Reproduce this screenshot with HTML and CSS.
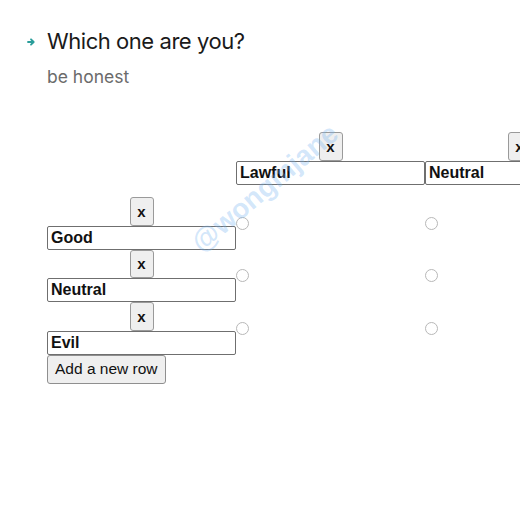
FILE: index.html
```html
<!DOCTYPE html>
<html>
<head>
<meta charset="utf-8">
<link rel="stylesheet" href="styles.css">
</head>
<body>
<div class="page">
  <div class="heading">
    <svg class="arrow" width="8" height="8" viewBox="0 0 8 8"><path d="M1 4H6.5M4 1.3L6.7 4L4 6.7" fill="none" stroke="#2a9d9a" stroke-width="1.8" stroke-linecap="round" stroke-linejoin="round"/></svg>
    <h1 class="title">Which one are you?</h1>
  </div>
  <p class="subtitle">be honest</p>

  <table class="grid">
    <thead>
      <tr>
        <th class="head-cell"></th>
        <th class="head-cell"><button class="del">x</button><input class="field" value="Lawful"></th>
        <th class="head-cell"><button class="del">x</button><input class="field" value="Neutral"></th>
      </tr>
    </thead>
    <tbody>
      <tr>
        <td class="row-cell"><button class="del">x</button><input class="field" value="Good"></td>
        <td class="radio-cell"><input type="radio" class="radio" name="r1"></td>
        <td class="radio-cell"><input type="radio" class="radio" name="r1"></td>
      </tr>
      <tr>
        <td class="row-cell"><button class="del">x</button><input class="field" value="Neutral"></td>
        <td class="radio-cell"><input type="radio" class="radio" name="r2"></td>
        <td class="radio-cell"><input type="radio" class="radio" name="r2"></td>
      </tr>
      <tr>
        <td class="row-cell"><button class="del">x</button><input class="field" value="Evil"></td>
        <td class="radio-cell"><input type="radio" class="radio" name="r3"></td>
        <td class="radio-cell"><input type="radio" class="radio" name="r3"></td>
      </tr>
    </tbody>
  </table>
  <button class="add">Add a new row</button>
</div>
<div class="watermark">@wongmjane</div>
</body>
</html>
```

FILE: styles.css
```css
html, body {
  margin: 0;
  padding: 0;
  background: #ffffff;
  overflow: hidden;
  width: 520px;
  height: 520px;
}

.page {
  padding: 26px 0 0 27px;
  font-family: "Liberation Sans", Arial, sans-serif;
  color: #111;
}

.heading {
  display: flex;
  align-items: center;
  gap: 12px;
}

.arrow {
  flex: none;
  margin-top: 1px;
}

.title {
  margin: 0;
  font-family: Inter, "Open Sans", sans-serif;
  font-weight: 400;
  font-size: 22px;
  line-height: 30px;
  color: #1a1a1a;
  letter-spacing: -0.45px;
}

.subtitle {
  margin: 9px 0 0 20px;
  font-family: Inter, "Open Sans", sans-serif;
  font-size: 17.5px;
  line-height: 24px;
  color: #6b6b6b;
}

.grid {
  margin: 43px 0 0 20px;
  border-collapse: collapse;
  border-spacing: 0;
}

.grid th, .grid td {
  padding: 0;
  width: 189px;
}

.head-cell {
  padding-bottom: 12px !important;
  vertical-align: bottom;
  text-align: center;
}

.row-cell {
  text-align: center;
}

.radio-cell {
  vertical-align: middle;
  text-align: left;
}

.del {
  display: block;
  margin: 0 auto;
  width: 24px;
  height: 28.5px;
  padding: 0;
  background: #efefef;
  border: 1px solid #9a9a9a;
  border-radius: 3px;
  font-family: "Liberation Sans", Arial, sans-serif;
  font-weight: 700;
  font-size: 15px;
  color: #111;
}

.head-cell .del {
  height: 29px;
}

.field {
  display: block;
  box-sizing: border-box;
  width: 189px;
  height: 24px;
  margin: 0;
  padding: 0 3px;
  border: 1px solid #6f6f6f;
  border-radius: 2px;
  background: #fff;
  font-family: "Liberation Sans", Arial, sans-serif;
  font-weight: 700;
  font-size: 16px;
  color: #111;
}

.radio {
  appearance: none;
  -webkit-appearance: none;
  display: block;
  width: 13px;
  height: 13px;
  margin: 0;
  border: 1px solid #b8b8b8;
  border-radius: 50%;
  background: #fff;
}

.add {
  display: block;
  margin: 0 0 0 20px;
  height: 29px;
  padding: 0 7px;
  background: #efefef;
  border: 1px solid #8f8f8f;
  border-radius: 3px;
  font-family: "Liberation Sans", Arial, sans-serif;
  font-size: 15.5px;
  color: #111;
}

.watermark {
  position: absolute;
  left: 170px;
  top: 172px;
  width: 190px;
  text-align: center;
  transform: rotate(-40deg);
  font-family: "Liberation Sans", Arial, sans-serif;
  font-weight: 700;
  font-size: 28px;
  color: rgba(120, 180, 240, 0.32);
  pointer-events: none;
  white-space: nowrap;
}
```
